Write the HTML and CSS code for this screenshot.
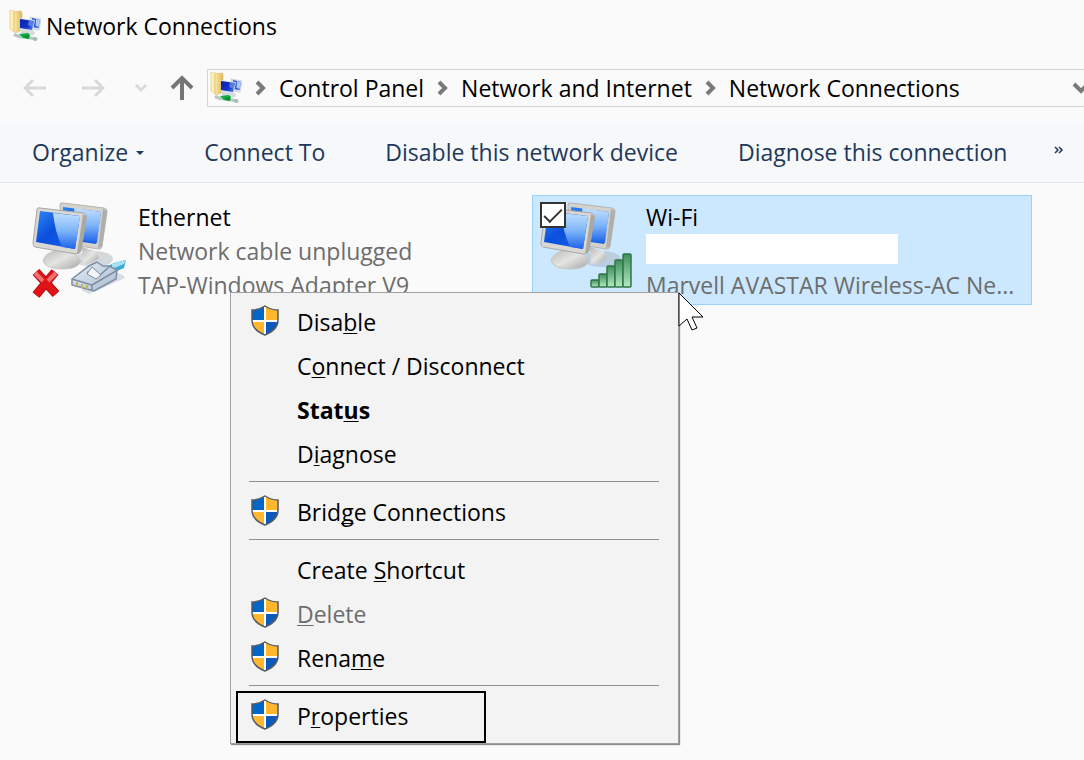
FILE: index.html
```html
<!DOCTYPE html>
<html lang="en">
<head>
  <meta charset="UTF-8">
  <meta name="viewport" content="width=device-width, initial-scale=1.0">
  <title>Network Connections</title>
  <link rel="stylesheet" href="styles.css">
</head>
<body>
  <!-- shared icons -->
  <svg class="defs" width="0" height="0" aria-hidden="true">
    <defs>
      <linearGradient id="screen" x1="0" y1="0" x2="1" y2="1">
        <stop offset="0" stop-color="#2f86f2"/>
        <stop offset="0.45" stop-color="#0b4fdd"/>
        <stop offset="1" stop-color="#1a62ea"/>
      </linearGradient>
      <linearGradient id="glare" x1="0" y1="0" x2="0" y2="1">
        <stop offset="0" stop-color="#c2e0ff"/>
        <stop offset="0.5" stop-color="#7db4f8"/>
        <stop offset="1" stop-color="#1d62ea"/>
      </linearGradient>
      <linearGradient id="stand" x1="0" y1="0" x2="1" y2="1">
        <stop offset="0" stop-color="#b8b8b8"/>
        <stop offset="0.5" stop-color="#e4e4e2"/>
        <stop offset="1" stop-color="#a4a4a4"/>
      </linearGradient>
      <linearGradient id="bar" x1="0" y1="0" x2="0" y2="1">
        <stop offset="0" stop-color="#3f8f5c"/>
        <stop offset="1" stop-color="#b5e8c2"/>
      </linearGradient>
      <linearGradient id="plug" x1="0" y1="0" x2="1" y2="1">
        <stop offset="0" stop-color="#e6eef6"/>
        <stop offset="1" stop-color="#a9bacd"/>
      </linearGradient>
      <linearGradient id="folder" x1="0" y1="0" x2="1" y2="0">
        <stop offset="0" stop-color="#fbe9a4"/>
        <stop offset="1" stop-color="#dcb75c"/>
      </linearGradient>
      <linearGradient id="smallscreen" x1="0" y1="0" x2="1" y2="1">
        <stop offset="0" stop-color="#0a1fa8"/>
        <stop offset="0.6" stop-color="#1233c8"/>
        <stop offset="1" stop-color="#5f8cf0"/>
      </linearGradient>
    </defs>

    <symbol id="i-network" viewBox="0 0 32 32">
      <path d="M1 0l4 0 0 22-4-3z" fill="#fdf0b8" stroke="#e0c373" stroke-width=".6"/>
      <path d="M5 2l7-1 1 2v17l-7 3-1-2z" fill="url(#folder)" stroke="#d8b964" stroke-width=".6"/>
      <path d="M21 7l11 2-2 11-8-1z" fill="#dbe4f2" stroke="#b4bfd0" stroke-width=".6"/>
      <path d="M23 8l8 2-1.500 8-7-1z" fill="#2a50d0"/>
      <path d="M27 9l4 1-1.500 7-3-1z" fill="#a9c9fa"/>
      <path d="M12 20h10l4 2-1 3-8 1-5-3z" fill="#d5dade"/>
      <path d="M11 8l15 2-2 11-13-1z" fill="#dbe1ec"/>
      <path d="M11 9l14 2-2 9-12-2z" fill="url(#smallscreen)"/>
      <path d="M20 10l5 1-1 6-5-2z" fill="#86a9f2" opacity=".6"/>
      <path d="M6 25l4 1.500 12 1.500 5 1" fill="none" stroke="#b3c8c2" stroke-width="3" stroke-linecap="round"/>
      <path d="M10 24l9-1 2 2-1 4-6-1z" fill="#17ad43"/>
      <path d="M14 26l6-1-1 4z" fill="#0c8a30"/>
      <circle cx="26" cy="29" r="2" fill="#a9bab8"/>
    </symbol>

    <symbol id="i-monitors" viewBox="0 0 98 98">
      <ellipse cx="62" cy="59" rx="19" ry="8" fill="#9fa8b0" opacity=".4"/>
      <path d="M50 47l14 4 3 7q-6 6-16 6z" fill="url(#stand)"/>
      <path d="M28 5q0-3 3-2l41 5q4 1 3 4l-5 34q-1 4-4 3l-36-6z" fill="#d4d2cd" stroke="#b5b3b0"/>
      <path d="M71 9l4 2-5 36-4 1z" fill="#b1afab"/>
      <path d="M31 7l38 5-5 32-33-5z" fill="url(#screen)"/>
      <path d="M42 8l27 4-4 31-20-3z" fill="url(#glare)"/>
      <path d="M27 49l15 3 7 9q-3 8-18 8-17 0-20-8 2-8 12-10z" fill="url(#stand)" stroke="#c6c6c4"/>
      <path d="M5 9q1-2 3-1l43 5q4 1 3 5l-5 32q-1 4-5 4L3 47q-2-1-2-4z" fill="#dad8d3" stroke="#aaa8a4"/>
      <path d="M51 14l4 3-6 35-4 2z" fill="#aaa8a4"/>
      <path d="M8 11l40 5-5 33L4 42z" fill="url(#screen)"/>
      <path d="M21 13l27 3-5 33-13-2q-7-15-9-34z" fill="url(#glare)"/>
    </symbol>

    <symbol id="i-shield" viewBox="0 0 30 32">
      <clipPath id="shieldclip">
        <path d="M15 1q6 4 13 4v10q0 10-13 15Q2 25 2 15V5q7 0 13-4z"/>
      </clipPath>
      <g clip-path="url(#shieldclip)">
        <path d="M0 0h15v16H0z" fill="#0067c8"/>
        <path d="M15 0h15v16H15z" fill="#ffb72e"/>
        <path d="M0 16h15v16H0z" fill="#ffb72e"/>
        <path d="M15 16h15v16H15z" fill="#0a59bb"/>
        <path d="M15 0v32M0 16h30" stroke="#fff" stroke-width="2"/>
      </g>
      <path d="M15 1q6 4 13 4v10q0 10-13 15Q2 25 2 15V5q7 0 13-4z" fill="none" stroke="#555c63" stroke-width="1.500"/>
    </symbol>

    <symbol id="i-chevron" viewBox="0 0 12 16">
      <path d="M2 2l6 6-6 6" fill="none" stroke="#7a7a7a" stroke-width="4"/>
    </symbol>
  </svg>

  <header class="titlebar">
    <svg class="net-icon"><use href="#i-network"/></svg>
    <h1>Network Connections</h1>
  </header>

  <nav class="navbar">
    <button class="nav-btn" aria-label="Back" disabled>
      <svg width="24" height="24" viewBox="0 0 24 24"><path d="M23 12H2M10 4l-8 8 8 8" fill="none" stroke="#d6d8da" stroke-width="3"/></svg>
    </button>
    <button class="nav-btn" aria-label="Forward" disabled>
      <svg width="24" height="24" viewBox="0 0 24 24"><path d="M1 12h21M14 4l8 8-8 8" fill="none" stroke="#d6d8da" stroke-width="3"/></svg>
    </button>
    <button class="nav-btn recent" aria-label="Recent locations" disabled>
      <svg width="14" height="24" viewBox="0 0 14 24"><path d="M2 9l5 5 5-5" fill="none" stroke="#d3dae1" stroke-width="3"/></svg>
    </button>
    <button class="nav-btn up" aria-label="Up">
      <svg width="24" height="26" viewBox="0 0 24 26"><path d="M12 25V3M2 13L12 3l10 10" fill="none" stroke="#757575" stroke-width="4"/></svg>
    </button>
    <div class="address">
      <svg class="net-icon"><use href="#i-network"/></svg>
      <svg class="chevron"><use href="#i-chevron"/></svg>
      <a href="#">Control Panel</a>
      <svg class="chevron"><use href="#i-chevron"/></svg>
      <a href="#">Network and Internet</a>
      <svg class="chevron"><use href="#i-chevron"/></svg>
      <a href="#">Network Connections</a>
      <button class="history" aria-label="Previous locations">
        <svg width="16" height="12" viewBox="0 0 16 12"><path d="M2 2l7 7 7-7" fill="none" stroke="#7a7a7a" stroke-width="4"/></svg>
      </button>
    </div>
  </nav>

  <div class="toolbar">
    <button>Organize<span class="caret"></span></button>
    <button>Connect To</button>
    <button>Disable this network device</button>
    <button>Diagnose this connection</button>
    <button class="more" aria-label="More commands">
      <svg width="10" height="8" viewBox="0 0 10 8"><path d="M1 1l3 3-3 3M5 1l3 3-3 3" fill="none" stroke="#1e395b" stroke-width="1.500"/></svg>
    </button>
  </div>

  <main class="connections">
    <section class="connection">
      <svg class="conn-icon" viewBox="0 0 98 98">
        <use href="#i-monitors"/>
        <!-- unplugged cable -->
        <path d="M80 73q12 0 13 5l-18 8-18 8-8-4z" fill="#9aa6b4" opacity=".35"/>
        <path d="M68 70l14-7 12-3-2 8-12 5z" fill="#3ba9d6"/>
        <path d="M80 64l14-4-2 4-12 5z" fill="#a5e2f4"/>
        <path d="M40 79l17-13 8-4 6 4 6 0 8 4-1 9-22 12-22-6z" fill="url(#plug)" stroke="#7c8da6" stroke-width="1.500"/>
        <path d="M40 79l20 6v6M60 85l24-14M55 72l12 4 10-9" fill="none" stroke="#7c8da6" stroke-width="1.500"/>
        <path d="M60 67l9 8-5 4-9-5z" fill="#f1f5fa" stroke="#7c8da6"/>
        <path d="M45 82v4M50 84v4M55 85v4" stroke="#c6b955" stroke-width="2"/>
        <path d="M4 72l20 22M23 72L4 95" stroke="#b80b0b" stroke-width="9"/>
        <path d="M4 72l20 22M23 72L4 95" stroke="#e01418" stroke-width="7"/>
        <path d="M3 73l8 8M24 73l-8 8" stroke="#ee7474" stroke-width="4"/>
      </svg>
      <div class="conn-text">
        <h2>Ethernet</h2>
        <p>Network cable unplugged</p>
        <p>TAP-Windows Adapter V9</p>
      </div>
    </section>

    <section class="connection selected">
      <input type="checkbox" class="pick" aria-label="Select Wi-Fi" checked>
      <svg class="conn-icon" viewBox="0 0 98 98">
        <use href="#i-monitors"/>
        <!-- signal strength -->
        <g fill="url(#bar)" stroke="#2f7648" stroke-width="1.500">
          <rect x="51" y="80" width="8" height="7" rx="1"/>
          <rect x="59" y="74" width="8" height="13" rx="1"/>
          <rect x="67" y="66" width="8" height="21" rx="1"/>
          <rect x="75" y="60" width="8" height="27" rx="1"/>
          <rect x="83" y="54" width="8" height="33" rx="1"/>
        </g>
      </svg>
      <div class="conn-text">
        <h2>Wi-Fi</h2>
        <p class="hidden-name"></p>
        <p>Marvell AVASTAR Wireless-AC Ne...</p>
      </div>
    </section>
  </main>

  <div class="menu" role="menu">
    <button role="menuitem"><svg class="shield"><use href="#i-shield"/></svg><span>Disa<u>b</u>le</span></button>
    <button role="menuitem"><span>C<u>o</u>nnect / Disconnect</span></button>
    <button role="menuitem" class="default"><span>Stat<u>u</u>s</span></button>
    <button role="menuitem"><span>D<u>i</u>agnose</span></button>
    <hr>
    <button role="menuitem"><svg class="shield"><use href="#i-shield"/></svg><span>Brid<u>g</u>e Connections</span></button>
    <hr>
    <button role="menuitem"><span>Create <u>S</u>hortcut</span></button>
    <button role="menuitem" disabled><svg class="shield"><use href="#i-shield"/></svg><span><u>D</u>elete</span></button>
    <button role="menuitem"><svg class="shield"><use href="#i-shield"/></svg><span>Rena<u>m</u>e</span></button>
    <hr>
    <button role="menuitem" class="marked"><svg class="shield"><use href="#i-shield"/></svg><span>P<u>r</u>operties</span></button>
  </div>

  <svg class="cursor" width="28" height="40" viewBox="0 0 28 40">
    <path d="M1 1v33l8-7 5 11 5-2-5-11h11z" fill="#fff" stroke="#000"/>
  </svg>
</body>
</html>
```
FILE: styles.css
```css
*, *::before, *::after {
  box-sizing: border-box;
}
body {
  margin: 0;
  min-height: 100vh;
  background: #fafafa;
  color: #000;
  font-family: "Open Sans", "Noto Sans", sans-serif;
  font-size: 23px;
  line-height: 34px;
  overflow: hidden;
}
button {
  padding: 0;
  border: none;
  background: none;
  color: inherit;
  font: inherit;
  cursor: pointer;
}
h1, h2, p {
  margin: 0;
  font-size: 23px;
  font-weight: normal;
}
.defs {
  position: absolute;
}
.net-icon {
  width: 32px;
  height: 32px;
  flex: none;
}

/* title + navigation */
.titlebar {
  display: flex;
  align-items: center;
  gap: 5px;
  height: 52px;
  padding-left: 9px;
}
.navbar {
  display: flex;
  align-items: center;
  height: 70px;
  padding: 2px 0 0 23px;
}
.nav-btn {
  display: flex;
  margin-right: 34px;
}
.nav-btn.recent {
  margin-left: -5px;
  margin-right: 22px;
}
.nav-btn.up {
  margin-right: 13px;
}
.address {
  display: flex;
  flex: 1;
  align-items: center;
  height: 38px;
  padding-left: 2px;
  border: 1px solid #d5d5d5;
  border-right: none;
  white-space: nowrap;
}
.address a {
  color: #000;
  text-decoration: none;
}
.chevron {
  width: 12px;
  height: 16px;
  margin: 0 12px 0 13px;
  flex: none;
}
.history {
  display: flex;
  width: 12px;
  margin-left: auto;
  overflow: hidden;
}
.history svg {
  flex: none;
}

/* command bar */
.toolbar {
  display: flex;
  align-items: center;
  gap: 60px;
  height: 61px;
  padding-left: 32px;
  background: #f6f8fa;
  border-bottom: 1px solid #e3e6e8;
  color: #1e395b;
  white-space: nowrap;
}
.caret {
  display: inline-block;
  margin-left: 8px;
  border: 4px solid transparent;
  border-top-color: #1e395b;
  border-bottom: none;
  vertical-align: 6px;
}
.toolbar .more {
  display: flex;
  margin: 0 0 4px -13px;
}

/* connection tiles */
.connections {
  display: grid;
  grid-template-columns: repeat(auto-fill, 500px);
  gap: 8px;
  padding: 12px 24px;
}
.connection {
  position: relative;
  display: flex;
  gap: 8px;
  height: 110px;
  padding: 4px 7px;
  border: 1px solid transparent;
}
.connection.selected {
  background: #cce8ff;
  border-color: #99d1ff;
}
.conn-icon {
  width: 98px;
  height: 98px;
  flex: none;
}
.conn-text p {
  color: #6d6d6d;
  white-space: nowrap;
}
.conn-text .hidden-name {
  width: 252px;
  height: 30px;
  margin-bottom: 4px;
  background: #fff;
}
.pick {
  position: absolute;
  top: 6px;
  left: 7px;
  width: 26px;
  height: 26px;
  margin: 0;
  appearance: none;
  background: #fff;
  border: 2px solid #333;
}
.pick:checked::after {
  content: "";
  position: absolute;
  top: 5px;
  left: 2px;
  width: 18px;
  height: 9px;
  border: solid #333;
  border-width: 0 0 2px 2px;
  transform: rotate(-45deg);
}

/* context menu */
.menu {
  position: absolute;
  top: 292px;
  left: 230px;
  width: 449px;
  padding: 8px 0 4px;
  background: #f3f3f3;
  border: 1px solid #a0a0a0;
  box-shadow: 1px 1px 1px #8c8c8c;
}
.menu button {
  position: relative;
  display: flex;
  align-items: center;
  width: 100%;
  height: 44px;
  padding: 0 0 2px 66px;
}
.menu button:disabled {
  color: #6d6d6d;
}
.menu .default {
  font-weight: bold;
}
.menu hr {
  height: 1px;
  margin: 4px 19px 9px 18px;
  border: none;
  background: #909090;
}
.menu u {
  text-decoration-thickness: 1px;
  text-underline-offset: 2px;
  text-decoration-skip-ink: none;
}
.shield {
  position: absolute;
  top: 4px;
  left: 19px;
  width: 30px;
  height: 32px;
}
.menu .marked::after {
  content: "";
  position: absolute;
  top: -4px;
  left: 5px;
  width: 250px;
  height: 52px;
  border: 2px solid #000;
}
.cursor {
  position: absolute;
  top: 292px;
  left: 678px;
}
```
